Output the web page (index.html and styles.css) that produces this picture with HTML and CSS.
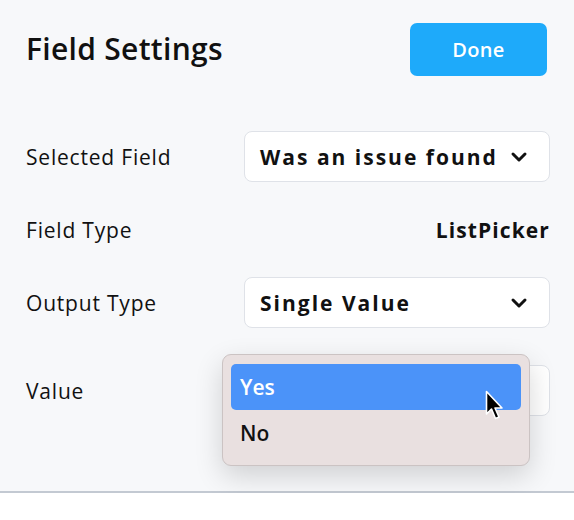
FILE: index.html
```html
<!DOCTYPE html>
<html>
<head>
<meta charset="utf-8">
<link rel="stylesheet" href="styles.css">
</head>
<body>
<div class="panel">
  <header class="head">
    <h1 class="title">Field Settings</h1>
    <button class="done">Done</button>
  </header>
  <div class="rows">
    <div class="row">
      <span class="label">Selected Field</span>
      <div class="select">
        <span class="select-text">Was an issue found</span>
        <svg class="chev" width="18" height="12" viewBox="0 0 18 12"><path d="M3 3 L9 9 L15 3" fill="none" stroke="#111" stroke-width="3" stroke-linecap="round" stroke-linejoin="round"/></svg>
      </div>
    </div>
    <div class="row">
      <span class="label">Field Type</span>
      <span class="value-text">ListPicker</span>
    </div>
    <div class="row">
      <span class="label">Output Type</span>
      <div class="select">
        <span class="select-text">Single Value</span>
        <svg class="chev" width="18" height="12" viewBox="0 0 18 12"><path d="M3 3 L9 9 L15 3" fill="none" stroke="#111" stroke-width="3" stroke-linecap="round" stroke-linejoin="round"/></svg>
      </div>
    </div>
    <div class="row row-value">
      <span class="label">Value</span>
      <div class="select"></div>
    </div>
  </div>
  <div class="popup">
    <div class="opt opt-active">Yes</div>
    <div class="opt">No</div>
  </div>
  <svg class="cursor" width="20" height="32" viewBox="0 0 20 32">
    <path d="M1.5 1.5 L1.5 24 L6.5 19 L10.5 28.5 L14 27 L10 18 L17 18 Z" fill="#000" stroke="#fff" stroke-width="1.6" stroke-linejoin="round"/>
  </svg>
</div>
</body>
</html>
```
FILE: styles.css
```css
* { box-sizing: border-box; }
html, body { margin: 0; padding: 0; background: #ffffff; }
body { font-family: "Open Sans", "DejaVu Sans", sans-serif; color: #111; }
.panel {
  position: relative;
  height: 493px;
  background: #f7f8fa;
  border-bottom: 2px solid #c3c9d2;
  padding: 23px 24px 0 26px;
}
.head { display: flex; justify-content: space-between; align-items: center; }
.title { margin: 0; font-size: 30px; font-weight: 600; letter-spacing: 0.3px; color: #111; margin-top: -3px; }
.done {
  width: 137px; height: 53px; margin-right: 3px;
  border: none; border-radius: 7px;
  background: #1eaafa; color: #fff;
  font-family: inherit; font-size: 20px; font-weight: 600; letter-spacing: 0.3px;
}
.rows { margin-top: 55px; display: flex; flex-direction: column; gap: 22px; }
.row { display: flex; justify-content: space-between; align-items: center; height: 51px; }
.row-value { margin-top: 15px; }
.label { font-size: 21px; font-weight: 500; letter-spacing: 0.8px; color: #111; }
.select {
  width: 306px; height: 51px;
  background: #fff; border: 1px solid #dfe2e8; border-radius: 8px;
  display: flex; align-items: center; justify-content: space-between;
  padding: 0 21px 0 15px;
}
.select-text { font-size: 21px; font-weight: 700; letter-spacing: 2px; color: #111; }
.value-text { font-size: 21px; font-weight: 700; letter-spacing: 1.1px; color: #111; }
.chev { display: block; }
.popup {
  position: absolute; left: 222px; top: 354px;
  width: 308px; height: 112px;
  background: #e9e0e0; border: 1px solid #cbc3c3; border-radius: 9px;
  box-shadow: 0 10px 28px rgba(0,0,0,0.16);
  padding: 9px 8px;
}
.opt {
  height: 46px; line-height: 46px; padding-left: 9px;
  font-size: 21px; font-weight: 600; color: #111; border-radius: 5px;
}
.opt-active { background: #4b93f9; color: #fff; }
.cursor { position: absolute; left: 485px; top: 390px; }
```
